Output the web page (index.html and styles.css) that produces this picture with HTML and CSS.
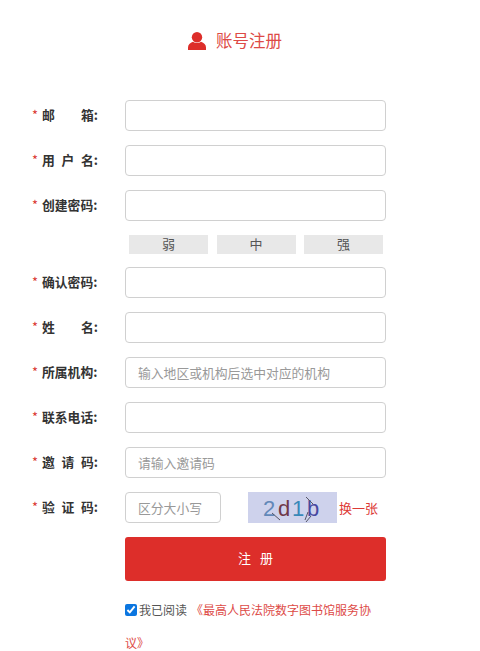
FILE: index.html
```html
<!DOCTYPE html>
<html lang="zh">
<head>
<meta charset="utf-8">
<title>账号注册</title>
<link rel="stylesheet" href="styles.css">
</head>
<body>
<h1 class="title">
  <svg class="user-icon" viewBox="0 0 18 18" width="18" height="18"><circle cx="9" cy="5.300" r="5.200" fill="#dd2e2a"/><path d="M0 18v-2.500c0-2.800 2-4.800 5-5.700 1 .8 2.500 1.300 4 1.300s3-.5 4-1.300c3 .9 5 2.900 5 5.700V18z" fill="#dd2e2a"/></svg>
  <span>账号注册</span>
</h1>
<form class="form">
  <div class="row"><label class="label"><i>*</i><b><span>邮</span><span>箱:</span></b></label><input class="input"></div>
  <div class="row"><label class="label"><i>*</i><b><span>用</span><span>户</span><span>名:</span></b></label><input class="input"></div>
  <div class="row"><label class="label"><i>*</i><b>创建密码:</b></label><input class="input"></div>
  <div class="strength"><span>弱</span><span>中</span><span>强</span></div>
  <div class="row"><label class="label"><i>*</i><b>确认密码:</b></label><input class="input"></div>
  <div class="row"><label class="label"><i>*</i><b><span>姓</span><span>名:</span></b></label><input class="input"></div>
  <div class="row"><label class="label"><i>*</i><b>所属机构:</b></label><input class="input" placeholder="输入地区或机构后选中对应的机构"></div>
  <div class="row"><label class="label"><i>*</i><b>联系电话:</b></label><input class="input"></div>
  <div class="row"><label class="label"><i>*</i><b><span>邀</span><span>请</span><span>码:</span></b></label><input class="input" placeholder="请输入邀请码"></div>
  <div class="row"><label class="label"><i>*</i><b><span>验</span><span>证</span><span>码:</span></b></label><input class="input short" placeholder="区分大小写">
    <svg class="captcha" viewBox="0 0 89 31" width="89" height="31">
      <rect width="89" height="31" fill="#ced2ec"/>
      <text x="15" y="24" class="c1">2</text><text x="30" y="24" class="c2">d</text><text x="44" y="24" class="c3">1</text><text x="59" y="24" class="c4">b</text>
      <path d="M24 21l8 7M58 5l7 7M60 20l-3 8M63 24l-5 6" stroke="#556" stroke-width="1" fill="none"/>
    </svg>
    <a class="swap">换一张</a>
  </div>
  <button class="submit" type="button">注 册</button>
  <p class="agree"><input class="check" type="checkbox" checked><span class="read">我已阅读</span><a class="law">《最高人民法院数字图书馆服务协议》</a></p>
</form>
</body>
</html>
```
FILE: styles.css
```css
* { box-sizing: border-box; }
html, body { margin: 0; padding: 0; background: #fff; }
body { width: 480px; height: 651px; overflow: hidden; font-family: "Noto Sans CJK SC", "Liberation Sans", sans-serif; color: #333; }
.title { display: flex; align-items: flex-start; justify-content: center; gap: 10px; margin: 0; padding: 29px 10px 0 0; height: 100px; font-size: 16.500px; font-weight: 400; line-height: 22px; color: #dd4a46; }
.user-icon { margin-top: 3px; }
.form { padding-left: 32px; width: 386px; }
.row { display: flex; align-items: center; height: 31px; margin-bottom: 14px; }
.label { display: flex; width: 93px; flex: none; padding-bottom: 2px; font-size: 12.800px; line-height: 18px; white-space: nowrap; }
.label i { width: 10px; color: #d9302c; font-style: normal; font-weight: 400; }
.label b { display: flex; justify-content: space-between; width: 56px; font-weight: 700; color: #333; }
.input { width: 261px; height: 31px; flex: none; padding: 0 12px; border: 1px solid #d0d0d0; border-radius: 4px; background: #fff; font: 12.800px "Noto Sans CJK SC", sans-serif; outline: none; }
.input::placeholder { color: #999; opacity: 1; }
.short { width: 96px; }
.captcha { margin-left: 27px; flex: none; }
.captcha text { font: 22px "Liberation Sans", sans-serif; }
.c1 { fill: #6288b8; }
.c2 { fill: #703848; }
.c3 { fill: #3888b8; }
.c4 { fill: #4848a0; }
.swap { margin-left: 2px; font-size: 13px; color: #dd3a36; white-space: nowrap; }
.strength { display: flex; gap: 8.500px; margin: 0 0 13px 97px; }
.strength span { width: 79px; height: 19px; background: #e8e8e8; text-align: center; font-size: 13px; line-height: 18px; color: #555; }
.submit { display: block; width: 261px; height: 44px; margin: 0 0 0 93px; padding: 0 0 3px; border: 0; border-radius: 3px; background: #dd2e2a; color: #fff; font: 13px/41px "Noto Sans CJK SC", sans-serif; word-spacing: 6px; }
.agree { width: 261px; margin: 13px 0 0 93px; font-size: 12px; line-height: 32.500px; color: #555; }
.check { width: 12px; height: 12px; margin: 0 2px 0 0; vertical-align: -1px; accent-color: #0b76e0; }
.read { margin-right: 4px; }
.law { color: #dd4a46; }
```
